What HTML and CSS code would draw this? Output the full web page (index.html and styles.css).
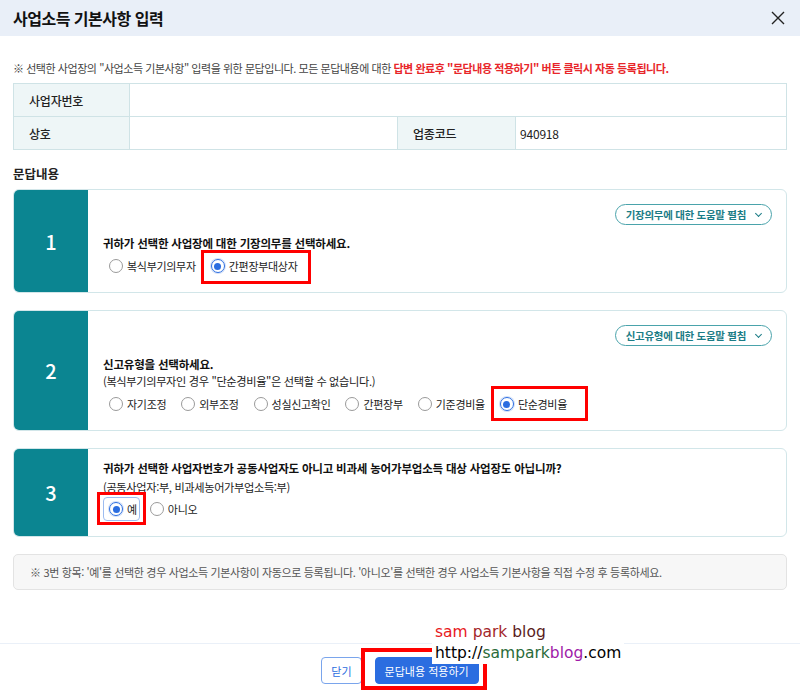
FILE: index.html
```html
<!DOCTYPE html>
<html lang="ko">
<head>
    <meta charset="UTF-8">
    <meta name="viewport" content="width=device-width, initial-scale=1.0">
    <title>사업소득 기본사항 입력</title>
    <link rel="stylesheet" href="styles.css">
</head>
<body>
    <div class="modal">
        <!-- 헤더 -->
        <div class="modal-header">
            <h1>사업소득 기본사항 입력</h1>
            <svg class="close-icon" width="14" height="14" viewBox="0 0 14 14">
                <path d="M1 1 L13 13 M13 1 L1 13" stroke="#222" stroke-width="1.4" fill="none"/>
            </svg>
        </div>

        <div class="modal-body">
            <p class="guide">※ 선택한 사업장의 "사업소득 기본사항" 입력을 위한 문답입니다. 모든 문답내용에 대한 <b>답변 완료후 "문답내용 적용하기" 버튼 클릭시 자동 등록됩니다.</b></p>

            <!-- 사업장 정보 -->
            <table class="info-table">
                <colgroup>
                    <col style="width: 116px">
                    <col style="width: 268px">
                    <col style="width: 118px">
                    <col>
                </colgroup>
                <tr>
                    <th>사업자번호</th>
                    <td colspan="3"></td>
                </tr>
                <tr>
                    <th>상호</th>
                    <td></td>
                    <th>업종코드</th>
                    <td class="code">940918</td>
                </tr>
            </table>

            <h2 class="section-title">문답내용</h2>

            <!-- 문항 1 -->
            <div class="qa-card">
                <div class="qa-num">1</div>
                <div class="qa-content">
                    <div class="help-row">
                        <span class="help-btn">기장의무에 대한 도움말 펼침 <i class="chev"></i></span>
                    </div>
                    <div class="question">귀하가 선택한 사업장에 대한 기장의무를 선택하세요.</div>
                    <div class="radio-group">
                        <label class="radio"><span class="dot"></span>복식부기의무자</label>
                        <label class="radio checked"><span class="dot"></span>간편장부대상자</label>
                    </div>
                </div>
            </div>

            <!-- 문항 2 -->
            <div class="qa-card">
                <div class="qa-num">2</div>
                <div class="qa-content">
                    <div class="help-row">
                        <span class="help-btn">신고유형에 대한 도움말 펼침 <i class="chev"></i></span>
                    </div>
                    <div class="question">신고유형을 선택하세요.</div>
                    <div class="sub">(복식부기의무자인 경우 "단순경비율"은 선택할 수 없습니다.)</div>
                    <div class="radio-group">
                        <label class="radio"><span class="dot"></span>자기조정</label>
                        <label class="radio"><span class="dot"></span>외부조정</label>
                        <label class="radio"><span class="dot"></span>성실신고확인</label>
                        <label class="radio"><span class="dot"></span>간편장부</label>
                        <label class="radio"><span class="dot"></span>기준경비율</label>
                        <label class="radio checked"><span class="dot"></span>단순경비율</label>
                    </div>
                </div>
            </div>

            <!-- 문항 3 -->
            <div class="qa-card">
                <div class="qa-num">3</div>
                <div class="qa-content no-help">
                    <div class="question">귀하가 선택한 사업자번호가 공동사업자도 아니고 비과세 농어가부업소득 대상 사업장도 아닙니까?</div>
                    <div class="sub">(공동사업자:부, 비과세농어가부업소득:부)</div>
                    <div class="radio-group">
                        <label class="radio checked focused"><span class="dot"></span>예</label>
                        <label class="radio"><span class="dot"></span>아니오</label>
                    </div>
                </div>
            </div>

            <div class="note-box">※ 3번 항목: '예'를 선택한 경우 사업소득 기본사항이 자동으로 등록됩니다. '아니오'를 선택한 경우 사업소득 기본사항을 직접 수정 후 등록하세요.</div>
        </div>

        <!-- 하단 버튼 -->
        <div class="modal-footer">
            <button class="btn-line">닫기</button>
            <button class="btn-primary">문답내용 적용하기</button>
        </div>
    </div>

    <!-- 캡처 위 표시 -->
    <div class="mark mark1"></div>
    <div class="mark mark2"></div>
    <div class="mark mark3"></div>
    <div class="mark mark4"></div>
    <div class="watermark">
        <div class="wm-top"><span class="c1">sam</span> <span class="c2">park</span> <span class="c3">blog</span></div>
        <div class="wm-url">http://<span class="c4">sampark</span><span class="c5">blog</span>.com</div>
    </div>
</body>
</html>
```

FILE: styles.css
```css
body {
    margin: 0;
    font-family: "Noto Sans CJK KR", "Noto Sans", sans-serif;
    color: #222;
    background-color: #fff;
}
.modal {
    width: 800px;
    height: 693px;
    display: flex;
    flex-direction: column;
}
.modal-header {
    height: 36px;
    background-color: #e9eff8;
    display: flex;
    align-items: center;
    justify-content: space-between;
    padding: 0 15px 0 13px;
}
.modal-header h1 {
    margin: 0;
    font-size: 16px;
    font-weight: bold;
    color: #111;
    letter-spacing: -0.5px;
}
.modal-body {
    flex: 1;
    padding: 0 13px;
}
.guide {
    margin: 24px 0 7px;
    font-size: 11px;
    line-height: 16px;
    color: #444;
    letter-spacing: -0.45px;
}
.guide b {
    color: #e8262a;
}
.info-table {
    width: 100%;
    table-layout: fixed;
    border-collapse: collapse;
    font-size: 12px;
}
.info-table th,
.info-table td {
    border: 1px solid #cfe3e6;
    height: 32px;
    padding: 0 15px;
    text-align: left;
    letter-spacing: -0.2px;
}
.info-table th {
    background-color: #eef6f7;
    font-weight: 500;
    color: #222;
}
.info-table td.code {
    padding-left: 4px;
}
.section-title {
    margin: 15px 0 6px;
    font-size: 12.5px;
    font-weight: bold;
    line-height: 18px;
}
.qa-card {
    display: grid;
    grid-template-columns: 74px 1fr;
    border: 1px solid #d2e6e9;
    border-radius: 6px;
    overflow: hidden;
    margin-bottom: 17px;
}
.qa-num {
    background-color: #0b8591;
    color: #fff;
    font-size: 20px;
    font-weight: 500;
    display: flex;
    align-items: center;
    justify-content: center;
}
.qa-content {
    padding: 14px 14px 15px 15px;
}
.qa-content.no-help {
    padding-top: 10px;
    padding-bottom: 15px;
}
.help-row {
    display: flex;
    justify-content: flex-end;
    margin-bottom: 9px;
}
.help-btn {
    display: inline-flex;
    align-items: center;
    gap: 6px;
    height: 19px;
    padding: 0 8px 0 10px;
    border: 1.5px solid #4aa3ab;
    border-radius: 12px;
    font-size: 10.5px;
    font-weight: bold;
    color: #1b7c86;
    letter-spacing: -0.3px;
}
.chev {
    width: 4px;
    height: 4px;
    border-right: 1.5px solid #1b7c86;
    border-bottom: 1.5px solid #1b7c86;
    transform: rotate(45deg);
    margin: -3px 2px 0 4px;
}
.question {
    font-size: 11.5px;
    font-weight: bold;
    line-height: 18px;
    color: #111;
    letter-spacing: -0.2px;
}
.sub {
    font-size: 11.2px;
    line-height: 17px;
    color: #222;
    letter-spacing: -0.35px;
}
.no-help .sub {
    margin-top: 2px;
}
.radio-group {
    display: flex;
    align-items: center;
    gap: 7px;
    margin-top: 3px;
}
.no-help .radio-group {
    margin-top: 1px;
    gap: 4px;
}
.radio {
    display: inline-flex;
    align-items: center;
    gap: 4px;
    height: 20px;
    padding: 0 1px 0 5px;
    font-size: 11px;
    color: #222;
    letter-spacing: -0.3px;
    border: 1px solid transparent;
    border-radius: 4px;
}
.radio .dot {
    width: 14px;
    height: 14px;
    border: 1px solid #9a9a9a;
    border-radius: 50%;
    box-sizing: border-box;
    position: relative;
}
.radio.checked .dot {
    border-color: #2b6de0;
    box-shadow: 0 0 0 1px #d3e0f7;
}
.radio.checked .dot::after {
    content: "";
    position: absolute;
    left: 2.5px;
    top: 2.5px;
    width: 7px;
    height: 7px;
    border-radius: 50%;
    background-color: #2b6de0;
}
.radio.focused {
    border-color: #9dbcf0;
    height: 22px;
    padding-right: 2px;
}
.note-box {
    margin-top: 16px;
    height: 36px;
    box-sizing: border-box;
    display: flex;
    align-items: center;
    padding: 0 16px;
    background-color: #f7f7f7;
    border: 1px solid #e3e3e3;
    border-radius: 5px;
    font-size: 11px;
    color: #555;
    letter-spacing: -0.35px;
}
.modal-footer {
    height: 50px;
    border-top: 1px solid #eaf0f8;
    display: flex;
    justify-content: center;
    align-items: flex-start;
    gap: 13px;
    padding-top: 13px;
    box-sizing: border-box;
}
.modal-footer button {
    height: 27px;
    border-radius: 4px;
    font-family: inherit;
    font-size: 11px;
    padding: 0 9px;
}
.btn-line {
    background-color: #fff;
    border: 1px solid #7aa5ec;
    color: #2b6de0;
}
.btn-primary {
    background-color: #2b6de0;
    border: 1px solid #2b6de0;
    color: #fff;
    padding: 0 13px;
}

/* 빨간 표시 박스 */
.mark {
    position: absolute;
    border: 3px solid #f00;
    box-sizing: border-box;
}
.mark1 { left: 201px; top: 250px; width: 110px; height: 34px; }
.mark2 { left: 491px; top: 386px; width: 97px; height: 35px; }
.mark3 { left: 97px; top: 492px; width: 49px; height: 33px; }
.mark4 { left: 361px; top: 648px; width: 126px; height: 42px; border-width: 4px; }

.watermark {
    position: absolute;
    left: 435px;
    top: 622px;
    font-family: "DejaVu Sans", sans-serif;
    font-size: 15.5px;
    line-height: 20px;
}
.wm-top .c1 { color: #e8191c; }
.wm-top .c2 { color: #a3262a; }
.wm-top .c3 { color: #5a1c1c; }
.wm-url {
    background-color: #fff;
    color: #000;
    line-height: 22px;
    margin-left: -3px;
    padding: 0 3px;
}
.wm-url .c4 { color: #2a6b3a; }
.wm-url .c5 { color: #a01aa8; }
```
